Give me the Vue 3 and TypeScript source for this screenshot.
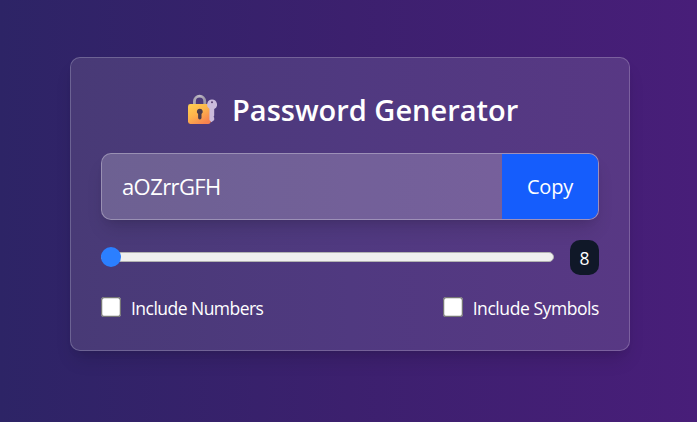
<script setup lang="ts">
import { ref } from 'vue'

const password = ref('aOZrrGFH')
const length = ref(8)
const numbers = ref(false)
const symbols = ref(false)

function generate(): void {
  let chars = 'ABCDEFGHIJKLMNOPQRSTUVWXYZabcdefghijklmnopqrstuvwxyz'
  if (numbers.value) chars += '0123456789'
  if (symbols.value) chars += '!@#$%^&*-_+=[]{}~'
  password.value = Array.from({ length: length.value }, () =>
    chars.charAt(Math.floor(Math.random() * chars.length))
  ).join('')
}

function copy(): void {
  navigator.clipboard?.writeText(password.value)
}
</script>

<template>
  <main class="page">
    <section class="card">
      <h1 class="title">
        <svg class="lock" viewBox="0 0 30 32" aria-hidden="true">
          <defs>
            <linearGradient id="body" x1="0" y1="0" x2="0.7" y2="1">
              <stop offset="0" stop-color="#ffd052" />
              <stop offset="0.5" stop-color="#fdb44c" />
              <stop offset="1" stop-color="#f7824f" />
            </linearGradient>
            <linearGradient id="shackle" x1="0" y1="0" x2="1" y2="0">
              <stop offset="0" stop-color="#aaa4b0" />
              <stop offset="0.5" stop-color="#c0bac6" />
              <stop offset="1" stop-color="#9d96a7" />
            </linearGradient>
          </defs>
          <path d="M7.4 11V7.4a5.2 5.2 0 0 1 10.4 0V11" fill="none" stroke="url(#shackle)" stroke-width="2.8" />
          <rect x="1" y="10" width="22.8" height="20" rx="2.4" fill="url(#body)" />
          <path d="M12.8 14.8a2.9 2.9 0 0 0-1.7 5.3v3.6a1.7 1.7 0 0 0 3.4 0v-3.6a2.9 2.9 0 0 0-1.7-5.3z" fill="#493c4e" />
          <path d="M25 5.6a5 5 0 0 0-2.6 9.2v11.2l2 2.2 2.8-2.2v-2.2l-.6-1.1.6-1.2v-6.4A5 5 0 0 0 25 5.6z" fill="#cbbbdc" />
          <circle cx="25" cy="8.3" r="1" fill="#594071" />
        </svg>
        <span class="title-text">Password Generator</span>
      </h1>
      <div class="output">
        <div class="password"><span>{{ password }}</span></div>
        <button class="copy" type="button" @click="copy">Copy</button>
      </div>
      <div class="length-row">
        <input v-model.number="length" class="slider" type="range" min="8" max="50" aria-label="Length" @input="generate" />
        <span class="count">{{ length }}</span>
      </div>
      <div class="options">
        <label class="option">
          <input v-model="numbers" class="check" type="checkbox" @change="generate" />
          <span class="numbers">Include Numbers</span>
        </label>
        <label class="option">
          <input v-model="symbols" class="check" type="checkbox" @change="generate" />
          <span class="symbols">Include Symbols</span>
        </label>
      </div>
    </section>
  </main>
</template>

<style>
body {
  margin: 0;
}
</style>

<style scoped>
* {
  box-sizing: border-box;
}
.page {
  height: 100vh;
  padding: 57px 67px 0 70px;
  background: linear-gradient(90deg, #2d2466, #3c206e 50%, #481e79);
  color: #fff;
  font-family: "Open Sans", "Noto Sans", sans-serif;
  overflow: hidden;
}
.card {
  height: 294px;
  padding: 30px;
  border: 1px solid rgba(255, 255, 255, 0.2);
  border-radius: 10px;
  background: linear-gradient(90deg, #483a76, #503980 50%, #583884) padding-box, rgba(255, 255, 255, 0.12);
  box-shadow: 0 12px 19px -4px rgba(0, 0, 0, 0.12), 0 5px 8px -5px rgba(0, 0, 0, 0.12);
}
.title {
  display: flex;
  height: 40px;
  margin: 0 0 25px;
  padding-left: 86px;
  gap: 15px;
  align-items: center;
  font-size: 29px;
  font-weight: 650;
  line-height: 40px;
  white-space: nowrap;
}
.lock {
  width: 30px;
  height: 32px;
  margin-top: 3px;
  flex: none;
}
.title-text {
  padding-top: 3px;
  letter-spacing: 0;
}
.output {
  display: flex;
  height: 67px;
  border: 1px solid rgba(255, 255, 255, 0.3);
  border-radius: 10px;
  background: rgba(255, 255, 255, 0.2);
  overflow: hidden;
  box-shadow: 0 12px 19px -4px rgba(0, 0, 0, 0.12), 0 5px 8px -5px rgba(0, 0, 0, 0.12);
}
.password {
  flex: 1;
  padding-left: 20px;
  font-size: 22px;
  line-height: 65px;
  letter-spacing: -0.6px;
}
.copy {
  width: 96px;
  padding: 1px 0 0;
  border: 0;
  background: #155dfc;
  color: #fff;
  font: 400 20px/30px "Open Sans", sans-serif;
  letter-spacing: -0.2px;
}
.length-row {
  display: flex;
  height: 35px;
  margin-top: 20px;
  gap: 16px;
  align-items: center;
}
.slider {
  flex: 1;
  min-width: 0;
  height: 20px;
  margin: 0 0 1px;
  appearance: none;
  background: transparent;
}
.slider::-webkit-slider-runnable-track {
  height: 10px;
  border: 1px solid #b2b2b2;
  border-radius: 5px;
  background: #efefef;
}
.slider::-webkit-slider-thumb {
  width: 20px;
  height: 20px;
  margin-top: -6px;
  margin-left: -1px;
  appearance: none;
  border-radius: 50%;
  background: #2b7fff;
}
.count {
  width: 29px;
  height: 35px;
  border-radius: 10px;
  background: #101828;
  font-size: 17.5px;
  line-height: 37px;
  text-align: center;
}
.options {
  display: flex;
  justify-content: space-between;
  margin-top: 20px;
}
.option {
  display: flex;
  height: 27px;
  gap: 10px;
  font-size: 17.5px;
  line-height: 27px;
  white-space: nowrap;
}
.check {
  width: 16px;
  height: 16px;
  margin: 1.6px 0 0;
  zoom: 1.25;
}
.numbers {
  letter-spacing: -0.53px;
}
.symbols {
  letter-spacing: -0.43px;
}
</style>
